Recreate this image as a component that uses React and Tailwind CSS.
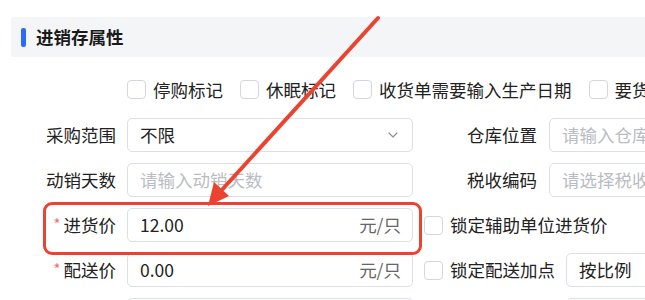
import { ChevronDown } from 'lucide-react';

const font = { fontFamily: '"Noto Sans CJK SC", "Noto Sans", sans-serif' };

function Checkbox({ label }) {
  return (
    <div className="flex items-center shrink-0">
      <span className="w-[19px] h-[19px] rounded-[4px] border border-[#d3d6dc] bg-white shrink-0" />
      <span className="ml-[7px] text-[17.5px] leading-none text-[#222] whitespace-nowrap">{label}</span>
    </div>
  );
}

function Label({ text, required, className = '' }) {
  return (
    <div className={`shrink-0 text-right text-[17.5px] leading-none text-[#222] whitespace-nowrap ${className}`}>
      {required && <span className="text-[#f56c6c] text-[15px] mr-[3px] align-[2px]">*</span>}
      {text}
    </div>
  );
}

function Input({ value, placeholder, unit, select, className = '' }) {
  return (
    <div
      className={`shrink-0 h-[34px] rounded-[5px] border border-[#dcdfe6] bg-white flex items-center pl-[12px] pr-[11px] text-[17.5px] leading-[24px] ${className}`}
    >
      <span className={`flex-1 min-w-0 whitespace-nowrap ${value ? 'text-[#222]' : 'text-[#b9bcc3]'}`}>
        {value || placeholder}
      </span>
      {unit && <span className="text-[#666] whitespace-nowrap">{unit}</span>}
      {select && <ChevronDown size={16} strokeWidth={1.6} className="text-[#8a8e96] shrink-0" />}
    </div>
  );
}

export default function App() {
  return (
    <div className="relative w-[645px] h-[300px] overflow-hidden bg-white" style={font}>
      {/* Section header */}
      <div className="pt-[17px] pl-[11px]">
        <div className="h-[40px] bg-[#f4f5f7] flex items-center rounded-l-[3px]">
          <span className="ml-[10px] w-[5px] h-[19px] rounded-[2px] bg-[#2b6cf6]" />
          <span className="ml-[10px] text-[17.5px] font-bold text-[#1a1a1a] leading-none">进销存属性</span>
        </div>
      </div>

      {/* Flags */}
      <div className="mt-[23px] pl-[127px] flex items-center gap-[17px] h-[19px]">
        <Checkbox label="停购标记" />
        <Checkbox label="休眠标记" />
        <Checkbox label="收货单需要输入生产日期" />
        <Checkbox label="要货单需要输入" />
      </div>

      {/* Form rows */}
      <div className="mt-[19px] flex flex-col gap-[11px]">
        <div className="flex items-center">
          <Label text="采购范围" className="w-[116px]" />
          <Input value="不限" select className="ml-[11px] w-[286px]" />
          <Label text="仓库位置" className="ml-[11px] w-[113px]" />
          <Input placeholder="请输入仓库位置" className="ml-[12px] w-[200px]" />
        </div>
        <div className="flex items-center">
          <Label text="动销天数" className="w-[116px]" />
          <Input placeholder="请输入动销天数" className="ml-[11px] w-[286px]" />
          <Label text="税收编码" className="ml-[11px] w-[113px]" />
          <Input placeholder="请选择税收编码" className="ml-[12px] w-[200px]" />
        </div>
        <div className="flex items-center">
          <Label text="进货价" required className="w-[116px]" />
          <Input value="12.00" unit="元/只" className="ml-[11px] w-[286px]" />
          <div className="ml-[11px] shrink-0">
            <Checkbox label="锁定辅助单位进货价" />
          </div>
        </div>
        <div className="flex items-center">
          <Label text="配送价" required className="w-[116px]" />
          <Input value="0.00" unit="元/只" className="ml-[11px] w-[286px]" />
          <div className="ml-[11px] shrink-0">
            <Checkbox label="锁定配送加点" />
          </div>
          <Input value="按比例" select className="ml-[11px] w-[120px]" />
        </div>
        <div className="flex items-center">
          <div className="w-[116px] shrink-0" />
          <Input placeholder="" className="ml-[11px] w-[286px]" />
          <Input placeholder="" className="ml-[153px] w-[120px]" />
        </div>
      </div>

      {/* Annotation: highlight box */}
      <div className="absolute left-[43px] top-[202px] w-[379px] h-[53px] border-[3px] border-[#ea4430] rounded-[9px] pointer-events-none" />

      {/* Annotation: arrow */}
      <svg className="absolute inset-0 pointer-events-none" width="645" height="300" viewBox="0 0 645 300">
        <line x1="378" y1="18" x2="220" y2="192" stroke="#ea4430" strokeWidth="4" strokeLinecap="round" />
        <polygon points="208,206 229,196 214,182" fill="#ea4430" />
      </svg>
    </div>
  );
}
